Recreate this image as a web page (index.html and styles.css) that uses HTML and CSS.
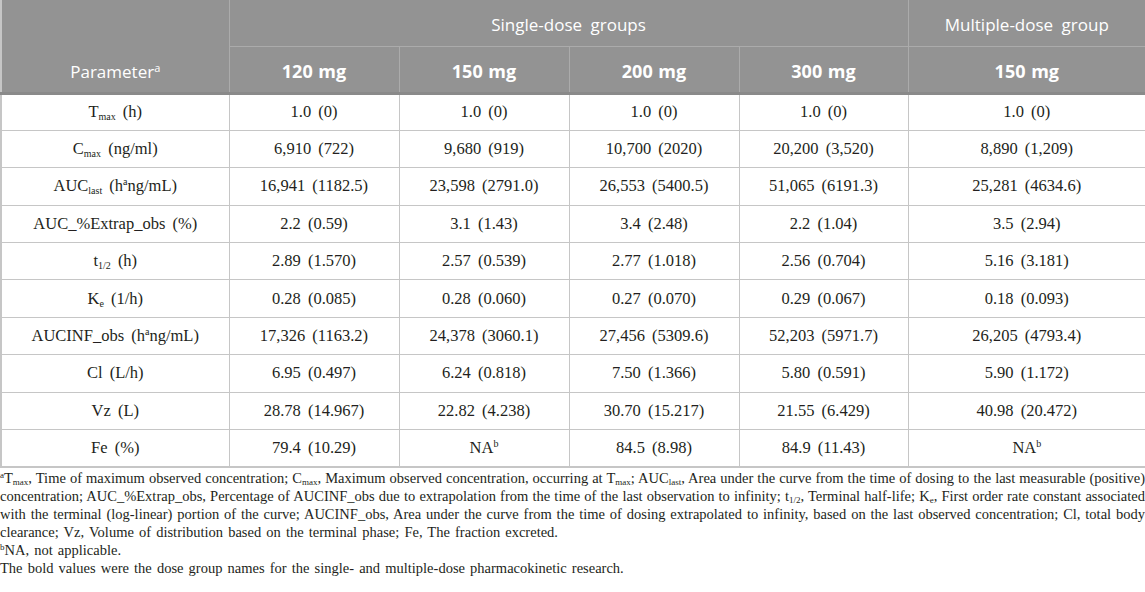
FILE: index.html
```html
<!DOCTYPE html>
<html lang="en">
<head>
    <meta charset="UTF-8">
    <meta name="viewport" content="width=device-width, initial-scale=1.0">
    <title>Pharmacokinetic parameters</title>
    <link rel="stylesheet" href="styles.css">
</head>
<body>
    <table class="pk-table">
        <colgroup>
            <col class="col-param">
            <col class="col-dose">
            <col class="col-dose">
            <col class="col-dose">
            <col class="col-dose-last">
            <col class="col-multi">
        </colgroup>
        <thead>
            <tr class="group-row">
                <th rowspan="2" class="param-head">Parameter<sup>a</sup></th>
                <th colspan="4">Single-dose groups</th>
                <th>Multiple-dose group</th>
            </tr>
            <tr class="dose-row">
                <th>120 mg</th>
                <th>150 mg</th>
                <th>200 mg</th>
                <th>300 mg</th>
                <th>150 mg</th>
            </tr>
        </thead>
        <tbody>
            <tr>
                <td>T<sub>max</sub> (h)</td>
                <td>1.0 (0)</td>
                <td>1.0 (0)</td>
                <td>1.0 (0)</td>
                <td>1.0 (0)</td>
                <td>1.0 (0)</td>
            </tr>
            <tr>
                <td>C<sub>max</sub> (ng/ml)</td>
                <td>6,910 (722)</td>
                <td>9,680 (919)</td>
                <td>10,700 (2020)</td>
                <td>20,200 (3,520)</td>
                <td>8,890 (1,209)</td>
            </tr>
            <tr>
                <td>AUC<sub>last</sub> (h<sup>a</sup>ng/mL)</td>
                <td>16,941 (1182.5)</td>
                <td>23,598 (2791.0)</td>
                <td>26,553 (5400.5)</td>
                <td>51,065 (6191.3)</td>
                <td>25,281 (4634.6)</td>
            </tr>
            <tr>
                <td>AUC_%Extrap_obs (%)</td>
                <td>2.2 (0.59)</td>
                <td>3.1 (1.43)</td>
                <td>3.4 (2.48)</td>
                <td>2.2 (1.04)</td>
                <td>3.5 (2.94)</td>
            </tr>
            <tr>
                <td>t<sub>1/2</sub> (h)</td>
                <td>2.89 (1.570)</td>
                <td>2.57 (0.539)</td>
                <td>2.77 (1.018)</td>
                <td>2.56 (0.704)</td>
                <td>5.16 (3.181)</td>
            </tr>
            <tr>
                <td>K<sub>e</sub> (1/h)</td>
                <td>0.28 (0.085)</td>
                <td>0.28 (0.060)</td>
                <td>0.27 (0.070)</td>
                <td>0.29 (0.067)</td>
                <td>0.18 (0.093)</td>
            </tr>
            <tr>
                <td>AUCINF_obs (h<sup>a</sup>ng/mL)</td>
                <td>17,326 (1163.2)</td>
                <td>24,378 (3060.1)</td>
                <td>27,456 (5309.6)</td>
                <td>52,203 (5971.7)</td>
                <td>26,205 (4793.4)</td>
            </tr>
            <tr>
                <td>Cl (L/h)</td>
                <td>6.95 (0.497)</td>
                <td>6.24 (0.818)</td>
                <td>7.50 (1.366)</td>
                <td>5.80 (0.591)</td>
                <td>5.90 (1.172)</td>
            </tr>
            <tr>
                <td>Vz (L)</td>
                <td>28.78 (14.967)</td>
                <td>22.82 (4.238)</td>
                <td>30.70 (15.217)</td>
                <td>21.55 (6.429)</td>
                <td>40.98 (20.472)</td>
            </tr>
            <tr>
                <td>Fe (%)</td>
                <td>79.4 (10.29)</td>
                <td>NA<sup>b</sup></td>
                <td>84.5 (8.98)</td>
                <td>84.9 (11.43)</td>
                <td>NA<sup>b</sup></td>
            </tr>
        </tbody>
    </table>

    <div class="notes">
        <p class="note-long">
            <span class="line"><sup>a</sup>T<sub>max</sub>, Time of maximum observed concentration; C<sub>max</sub>, Maximum observed concentration, occurring at T<sub>max</sub>; AUC<sub>last</sub>, Area under the curve from the time of dosing to the last measurable (positive)</span>
            <span class="line">concentration; AUC_%Extrap_obs, Percentage of AUCINF_obs due to extrapolation from the time of the last observation to infinity; t<sub>1/2</sub>, Terminal half-life; K<sub>e</sub>, First order rate constant associated</span>
            <span class="line">with the terminal (log-linear) portion of the curve; AUCINF_obs, Area under the curve from the time of dosing extrapolated to infinity, based on the last observed concentration; Cl, total body</span>
            <span class="line last">clearance; Vz, Volume of distribution based on the terminal phase; Fe, The fraction excreted.</span>
        </p>
        <p><sup>b</sup>NA, not applicable.</p>
        <p>The bold values were the dose group names for the single- and multiple-dose pharmacokinetic research.</p>
    </div>
</body>
</html>
```

FILE: styles.css
```css
* {
    margin: 0;
    padding: 0;
    box-sizing: border-box;
}

body {
    background: #ffffff;
    color: #231f20;
    font-family: 'Liberation Serif', 'Times New Roman', serif;
}

.pk-table {
    width: 1145px;
    table-layout: fixed;
    border-collapse: collapse;
    border: 2px solid #c6c6c6;
    border-top: none;
}

.col-param { width: 228px; }
.col-dose { width: 170px; }
.col-dose-last { width: 169px; }
.col-multi { width: 238px; }

.pk-table th {
    background: #939393;
    color: #ffffff;
    font-family: 'Open Sans', 'Noto Sans', sans-serif;
    font-size: 17px;
    font-weight: 400;
    word-spacing: 4px;
    text-align: center;
    border: 1px solid #ababab;
    border-top: none;
}

.group-row th {
    height: 46px;
    padding-top: 3px;
    vertical-align: middle;
}

.dose-row th {
    height: 47px;
    padding-top: 3px;
    font-size: 18px;
    font-weight: 700;
    word-spacing: 1px;
    border-bottom: 3px solid #8a8a8a;
}

.pk-table th.param-head {
    vertical-align: bottom;
    padding-bottom: 9px;
    border-left: none;
    border-bottom: 3px solid #8a8a8a;
}

.param-head sup {
    font-size: 11px;
    vertical-align: 6px;
}

.pk-table td {
    height: 37.4px;
    text-align: center;
    vertical-align: middle;
    font-size: 16.5px;
    border: 1px solid #c6c6c6;
    word-spacing: 3px;
}

.pk-table tbody tr:last-child td {
    border-bottom: 2px solid #c6c6c6;
}

sub {
    font-size: 10px;
    vertical-align: -3px;
    line-height: 0;
}

sup {
    font-size: 10px;
    vertical-align: 6px;
    line-height: 0;
}

.notes {
    padding-top: 1px;
    font-size: 14.5px;
    line-height: 18px;
    word-spacing: 1.5px;
}

.notes sub {
    font-size: 9px;
    vertical-align: -2px;
}

.notes sup {
    font-size: 9px;
    vertical-align: 5px;
}

.note-long .line {
    display: block;
    white-space: nowrap;
    word-spacing: 0;
    text-align: justify;
    text-align-last: justify;
}

.note-long .line.last {
    word-spacing: 1.5px;
    text-align-last: left;
}
```
